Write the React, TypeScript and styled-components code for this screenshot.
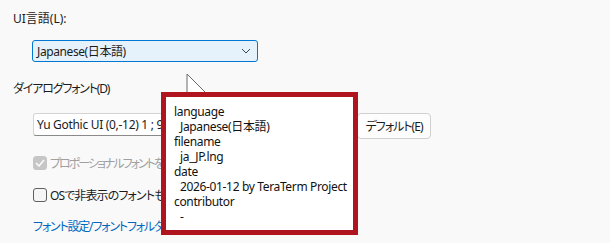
import { createGlobalStyle, styled } from "styled-components";

const GlobalStyle = createGlobalStyle`
  html, body {
    margin: 0;
    padding: 0;
    background: #f9f9f9;
  }
  body {
    font-family: "Noto Sans", "Noto Sans CJK JP", sans-serif;
    font-feature-settings: "palt";
    font-size: 12px;
    color: #1b1b1b;
  }
`;

const Page = styled.div`
  position: relative;
  width: 610px;
  height: 243px;
  overflow: hidden;
  padding: 10px 0 0 13px;
  box-sizing: border-box;
  display: flex;
  flex-direction: column;
`;

const Label = styled.div<{ $gap?: number; $ls?: number }>`
  height: 18px;
  line-height: 18px;
  margin-top: ${(p) => p.$gap ?? 0}px;
  letter-spacing: ${(p) => p.$ls ?? 0}px;
  white-space: nowrap;
`;

const Select = styled.div`
  margin: 12px 0 0 19px;
  width: 226px;
  height: 22px;
  box-sizing: border-box;
  border: 1px solid #0078d4;
  border-radius: 3px;
  background: #e5f1fb;
  display: flex;
  align-items: center;
  justify-content: space-between;
  padding: 0 6px 0 4px;
  letter-spacing: -0.4px;
`;

const FontRow = styled.div`
  margin: 15px 0 0 20px;
  display: flex;
  align-items: flex-start;
  gap: 7px;
`;

const Field = styled.div`
  width: 317px;
  height: 23px;
  box-sizing: border-box;
  border: 1px solid #d4d4d4;
  border-bottom-color: #8a8a8a;
  border-radius: 3px;
  background: #fff;
  padding: 0 3px;
  display: flex;
  align-items: center;
  white-space: nowrap;
  overflow: hidden;
`;

const Button = styled.div`
  width: 74px;
  height: 26px;
  box-sizing: border-box;
  border: 1px solid #d0d0d0;
  border-radius: 4px;
  background: #fdfdfd;
  display: flex;
  align-items: center;
  justify-content: center;
  white-space: nowrap;
  letter-spacing: -1px;
`;

const CheckRow = styled.div<{ $gap: number; $disabled?: boolean }>`
  margin: ${(p) => p.$gap}px 0 0 20px;
  height: 14px;
  display: flex;
  align-items: center;
  gap: 3px;
  white-space: nowrap;
  color: ${(p) => (p.$disabled ? "#a0a0a0" : "#1b1b1b")};
`;

const Box = styled.div<{ $checked?: boolean }>`
  width: 14px;
  height: 14px;
  flex: none;
  box-sizing: border-box;
  border-radius: 3px;
  border: 1px solid ${(p) => (p.$checked ? "#c6c6c6" : "#5f5f5f")};
  background: ${(p) => (p.$checked ? "#c6c6c6" : "#f6f6f6")};
  display: flex;
  align-items: center;
  justify-content: center;
`;

/* text running under the tooltip is cut where the tooltip starts */
const Clip = styled.span<{ $max: number; $ls?: number }>`
  display: inline-block;
  max-width: ${(p) => p.$max}px;
  overflow: hidden;
  white-space: nowrap;
  vertical-align: top;
  letter-spacing: ${(p) => p.$ls ?? 0}px;
`;

const Link = styled.div`
  margin: 16px 0 0 20px;
  height: 18px;
  line-height: 18px;
  color: #0067c0;
  white-space: nowrap;
`;

const Pointer = styled.svg`
  position: absolute;
  left: 186px;
  top: 73px;
`;

const Tooltip = styled.div`
  position: absolute;
  left: 161px;
  top: 92px;
  width: 197px;
  height: 143px;
  box-sizing: border-box;
  border: 5px solid #b0141e;
  background: #fff;
  padding: 7px 0 0 8px;
  line-height: 15px;
  letter-spacing: -0.35px;
  color: #111;
`;

const TipLine = styled.div<{ $indent?: boolean }>`
  padding-left: ${(p) => (p.$indent ? 6 : 0)}px;
  white-space: nowrap;
`;

const tipRows = [
  ["language", "Japanese(日本語)"],
  ["filename", "ja_JP.lng"],
  ["date", "2026-01-12 by TeraTerm Project"],
  ["contributor", "-"],
];

export default function App() {
  return (
    <>
      <GlobalStyle />
      <Page>
        <Label>UI言語(L):</Label>
        <Select>
          <span>Japanese(日本語)</span>
          <svg width="10" height="6" viewBox="0 0 10 6">
            <path d="M1 1 L5 5 L9 1" fill="none" stroke="#444" strokeWidth="1" />
          </svg>
        </Select>
        <Label $gap={18} $ls={-1.2}>
          ダイアログフォント(D)
        </Label>
        <FontRow>
          <Field>
            <Clip $max={125} $ls={-0.3}>
              Yu Gothic UI (0,-12) 1 ; 9pt
            </Clip>
          </Field>
          <Button>デフォルト(E)</Button>
        </FontRow>
        <CheckRow $gap={17} $disabled>
          <Box $checked>
            <svg width="10" height="8" viewBox="0 0 10 8">
              <path d="M1 4 L4 7 L9 1" fill="none" stroke="#fff" strokeWidth="1.4" />
            </svg>
          </Box>
          <Clip $max={111} $ls={-2}>
            プロポーショナルフォントを使用する
          </Clip>
        </CheckRow>
        <CheckRow $gap={18}>
          <Box />
          <Clip $max={111} $ls={-0.9}>
            OSで非表示のフォントも表示する
          </Clip>
        </CheckRow>
        <Link>
          <Clip $max={128} $ls={-1.2}>
            フォント設定/フォントフォルダを開く
          </Clip>
        </Link>
        <Pointer width="22" height="22" viewBox="0 0 22 22">
          <polygon points="1,1 1,21 21,21" fill="#fff" stroke="#6a6a6a" strokeWidth="1" />
        </Pointer>
        <Tooltip>
          {tipRows.map(([k, v]) => (
            <div key={k}>
              <TipLine>{k}</TipLine>
              <TipLine $indent>{v}</TipLine>
            </div>
          ))}
        </Tooltip>
      </Page>
    </>
  );
}
